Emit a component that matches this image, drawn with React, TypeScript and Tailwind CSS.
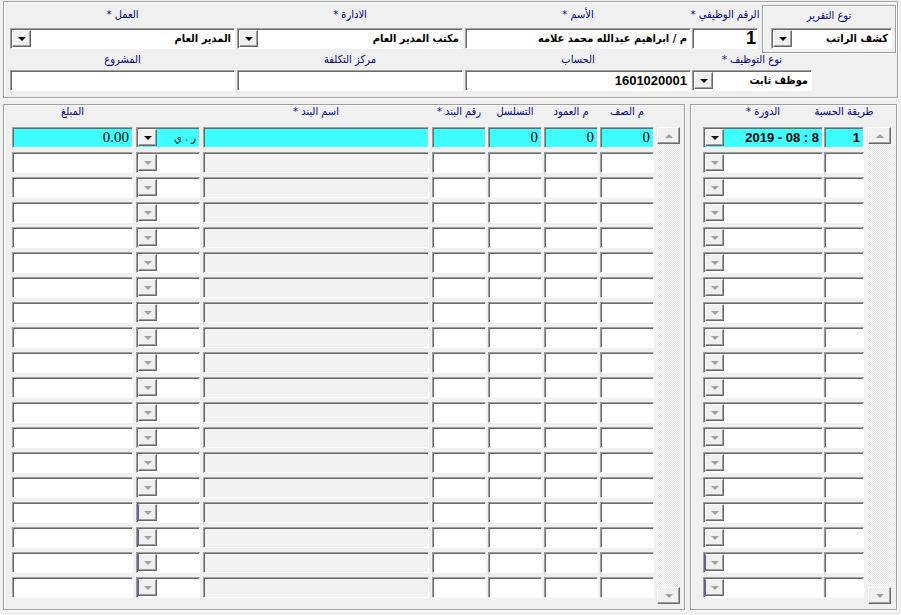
import React from "react"

const AR = "font-['DejaVu_Sans_Condensed','DejaVu_Sans',sans-serif]"
const SUNKEN =
  "border border-t-[#a0a0a0] border-l-[#a0a0a0] border-b-white border-r-white shadow-[inset_1px_1px_0_#696969]"
const RAISED =
  "border border-t-white border-b-[#696969] border-r-[#696969] shadow-[inset_-1px_-1px_0_#a0a0a0] bg-[#f0f0f0]"
const ETCHED = "border border-[#a0a0a0] shadow-[inset_1px_1px_0_#ffffff,1px_1px_0_#ffffff]"
const LABEL = `text-[#000080] text-[11px] whitespace-nowrap ${AR}`
const VAL_AR = `${AR} text-[11px] font-bold text-black`
const VAL_NUM = "font-['Liberation_Sans',sans-serif] text-[13px] font-bold text-black"
const VAL_SERIF = "font-['Liberation_Serif',serif] text-[15px] text-black"

function Arrow({ up, off }: { up?: boolean; off?: boolean }) {
  if (up) {
    return <span className="w-0 h-0 border-x-[4px] border-x-transparent border-b-[4px] border-b-[#a0a0a0]" />
  }
  return (
    <span
      className={`w-0 h-0 border-x-[4px] border-x-transparent border-t-[4px] ${
        off ? "border-t-[#a0a0a0]" : "border-t-black"
      }`}
    />
  )
}

function DropBtn({ off, blue }: { off?: boolean; blue?: boolean }) {
  return (
    <span
      className={`${RAISED} ${
        blue ? "border-l-[#5a5ad0]" : "border-l-white"
      } w-[19px] h-[17px] shrink-0 flex items-center justify-center ml-px`}
    >
      <Arrow off={off} />
    </span>
  )
}

function Combo({
  w,
  text,
  cyan,
  off,
  blue,
  textClass,
}: {
  w: string
  text?: React.ReactNode
  cyan?: boolean
  off?: boolean
  blue?: boolean
  textClass?: string
}) {
  return (
    <div className={`${w} h-[21px] ${SUNKEN} ${cyan ? "bg-[#40ffff]" : "bg-white"} flex items-center shrink-0`}>
      <span className={`flex-1 text-right pr-[3px] overflow-hidden whitespace-nowrap leading-[19px] ${textClass ?? ""}`}>
        {text}
      </span>
      <DropBtn off={off} blue={blue} />
    </div>
  )
}

function Field({
  w,
  cyan,
  gray,
  textClass,
  children,
}: {
  w: string
  cyan?: boolean
  gray?: boolean
  textClass?: string
  children?: React.ReactNode
}) {
  return (
    <div
      className={`${w} h-[21px] ${SUNKEN} ${
        cyan ? "bg-[#40ffff]" : gray ? "bg-[#f2f2f2]" : "bg-white"
      } shrink-0 text-right leading-[19px] overflow-hidden whitespace-nowrap ${textClass ?? "pr-[3px]"}`}
    >
      {children}
    </div>
  )
}

function ScrollBar() {
  return (
    <div className="mt-[22px] w-[23px] h-[477px] flex flex-col shrink-0">
      <div className={`${RAISED} border-l-white h-[17px] flex items-center justify-center`}>
        <Arrow up />
      </div>
      <div className="flex-1 bg-[image:repeating-conic-gradient(#ffffff_0_25%,#e4e4e4_0_50%)] bg-[length:2px_2px]" />
      <div className={`${RAISED} border-l-white h-[17px] flex items-center justify-center`}>
        <Arrow off />
      </div>
    </div>
  )
}

function Head({ w, text, className = "" }: { w: string; text: string; className?: string }) {
  return (
    <div className={`${w} ${className} shrink-0 flex justify-center`}>
      <span className={`${LABEL} leading-[14px]`}>{text}</span>
    </div>
  )
}

function TopFrame() {
  return (
    <div className={`mr-[3px] w-[895px] h-[97px] ${ETCHED}`}>
      {/* row 1 */}
      <div className="flex mt-[3px]">
        <div className={`mr-px w-[134px] h-[48px] ${ETCHED} flex flex-col`}>
          <div className={`${LABEL} h-[20px] leading-[20px] text-center`}>نوع التقرير</div>
          <div className="mt-[2px] mr-[3px]">
            <Combo w="w-[121px]" text="كشف الراتب" textClass={VAL_AR} />
          </div>
        </div>

        <div className="mr-[4px] w-[66px]">
          <div className="h-[20px] flex justify-center">
            <span className={`${LABEL} leading-[20px]`}>الرقم الوظيفي *</span>
          </div>
          <div className="mt-[3px]">
            <Field
              w="w-[66px]"
              textClass="pr-px font-['Liberation_Sans',sans-serif] text-[18px] font-bold text-black leading-[19px]"
            >
              1
            </Field>
          </div>
        </div>

        <div className="mr-px w-[226px]">
          <div className={`${LABEL} h-[20px] leading-[20px] text-center`}>الأسم *</div>
          <div className="mt-[3px]">
            <Field w="w-[226px]" textClass={`pr-[3px] ${VAL_AR}`}>
              م / ابراهيم عبدالله محمد علامه
            </Field>
          </div>
        </div>

        <div className="mr-[2px] w-[226px]">
          <div className={`${LABEL} h-[20px] leading-[20px] text-center`}>الادارة *</div>
          <div className="mt-[3px]">
            <Combo w="w-[226px]" text="مكتب المدير العام" textClass={VAL_AR} />
          </div>
        </div>

        <div className="mr-[2px] w-[225px]">
          <div className={`${LABEL} h-[20px] leading-[20px] text-center`}>العمل *</div>
          <div className="mt-[3px]">
            <Combo w="w-[225px]" text="المدير العام" textClass={VAL_AR} />
          </div>
        </div>
      </div>

      {/* row 2 */}
      <div className="flex">
        <div className="mr-[85px] w-[120px]">
          <div className="h-[14px] flex justify-center">
            <span className={`${LABEL} leading-[14px]`}>نوع التوظيف *</span>
          </div>
          <div className="mt-[3px]">
            <Combo w="w-[120px]" text="موظف ثابت" textClass={VAL_AR} />
          </div>
        </div>

        <div className="mr-px w-[226px]">
          <div className={`${LABEL} h-[14px] leading-[14px] text-center`}>الحساب</div>
          <div className="mt-[3px]">
            <Field w="w-[226px]" textClass={`pr-[3px] ${VAL_NUM}`}>
              1601020001
            </Field>
          </div>
        </div>

        <div className="mr-[2px] w-[226px]">
          <div className={`${LABEL} h-[14px] leading-[14px] text-center`}>مركز التكلفة</div>
          <div className="mt-[3px]">
            <Field w="w-[226px]" />
          </div>
        </div>

        <div className="mr-[2px] w-[225px]">
          <div className={`${LABEL} h-[14px] leading-[14px] text-center`}>المشروع</div>
          <div className="mt-[3px]">
            <Field w="w-[225px]" />
          </div>
        </div>
      </div>
    </div>
  )
}

const ROWS = Array.from({ length: 19 }, (_, i) => i)

function RightPanel() {
  return (
    <div className={`w-[207px] h-[506px] ${ETCHED} flex pr-[5px] shrink-0`}>
      <ScrollBar />
      <div className="mr-[4px]">
        <div className="flex h-[22px]">
          <Head w="w-[40px]" text="طريقة الحسبة" />
          <Head w="w-[120px]" text="الدورة *" className="mr-px" />
        </div>
        <div className="flex flex-col gap-[4px]">
          {ROWS.map((i) => {
            const first = i === 0
            return (
              <div key={i} className="flex">
                <Field w="w-[40px]" cyan={first} textClass={`pr-[3px] ${VAL_NUM}`}>
                  {first ? "1" : null}
                </Field>
                <div className="mr-px">
                  <Combo
                    w="w-[120px]"
                    cyan={first}
                    off={!first}
                    blue={i >= 17}
                    textClass={VAL_NUM}
                    text={first ? <span dir="ltr">2019 - 08 : 8</span> : null}
                  />
                </div>
              </div>
            )
          })}
        </div>
      </div>
    </div>
  )
}

function LeftPanel() {
  const serif = `pr-[3px] ${VAL_SERIF}`
  return (
    <div className={`mr-[5px] w-[682px] h-[506px] ${ETCHED} flex pr-[4px] shrink-0`}>
      <ScrollBar />
      <div className="mr-[3px]">
        <div className="flex h-[22px]">
          <Head w="w-[54px]" text="م الصف" />
          <Head w="w-[54px]" text="م العمود" className="mr-[2px]" />
          <Head w="w-[54px]" text="التسلسل" className="mr-[2px]" />
          <Head w="w-[54px]" text="رقم البند *" className="mr-[2px]" />
          <Head w="w-[226px]" text="اسم البند *" className="mr-[3px]" />
          <Head w="w-[64px]" text="" className="mr-[3px]" />
          <Head w="w-[121px]" text="المبلغ" className="mr-[3px]" />
        </div>
        <div className="flex flex-col gap-[4px]">
          {ROWS.map((i) => {
            const first = i === 0
            return (
              <div key={i} className="flex">
                <Field w="w-[54px]" cyan={first} textClass={serif}>
                  {first ? "0" : null}
                </Field>
                <div className="mr-[2px]">
                  <Field w="w-[54px]" cyan={first} textClass={serif}>
                    {first ? "0" : null}
                  </Field>
                </div>
                <div className="mr-[2px]">
                  <Field w="w-[54px]" cyan={first} textClass={serif}>
                    {first ? "0" : null}
                  </Field>
                </div>
                <div className="mr-[2px]">
                  <Field w="w-[54px]" cyan={first} />
                </div>
                <div className="mr-[3px]">
                  <Field w="w-[226px]" cyan={first} gray={!first} />
                </div>
                <div className="mr-[3px]">
                  <Combo
                    w="w-[64px]"
                    cyan={first}
                    off={!first}
                    blue={i >= 15}
                    textClass={`${AR} text-[11px] text-black`}
                    text={first ? "ر . ي" : null}
                  />
                </div>
                <div className="mr-[3px]">
                  <Field w="w-[121px]" cyan={first} textClass={serif}>
                    {first ? <span dir="ltr">0.00</span> : null}
                  </Field>
                </div>
              </div>
            )
          })}
        </div>
      </div>
    </div>
  )
}

export default function App() {
  return (
    <div dir="rtl" className="w-[901px] h-[615px] bg-[#f0f0f0] overflow-hidden pt-px">
      <TopFrame />
      <div className="flex mt-[6px] mr-[4px]">
        <RightPanel />
        <LeftPanel />
      </div>
    </div>
  )
}
